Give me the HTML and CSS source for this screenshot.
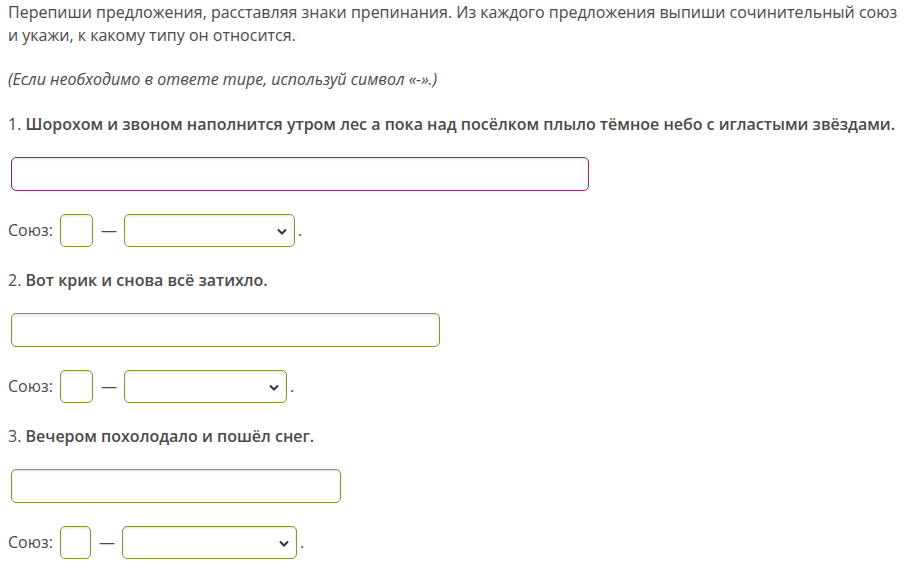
FILE: index.html
```html
<!DOCTYPE html>
<html lang="ru">
<head>
  <meta charset="UTF-8">
  <title>Задание</title>
  <link rel="stylesheet" href="styles.css">
</head>
<body>
  <p class="intro">Перепиши предложения, расставляя знаки препинания. Из каждого предложения выпиши сочинительный союз и укажи, к какому типу он относится.</p>
  <p class="note">(Если необходимо в ответе тире, используй символ «-».)</p>

  <div class="task">
    <p class="question">1. <b>Шорохом и звоном наполнится утром лес а пока над посёлком плыло тёмное небо с игластыми звёздами.</b></p>
    <input class="answer active" style="width:578px">
    <div class="union">
      <span>Союз:</span>
      <input class="small">
      <span class="dash">—</span>
      <span class="sel"><select style="width:171px"><option></option></select><svg viewBox="0 0 10 6"><path d="M1 1l4 4 4-4"/></svg></span>
      <span class="dot">.</span>
    </div>
  </div>

  <div class="task">
    <p class="question">2. <b>Вот крик и снова всё затихло.</b></p>
    <input class="answer" style="width:429px">
    <div class="union">
      <span>Союз:</span>
      <input class="small">
      <span class="dash">—</span>
      <span class="sel"><select style="width:163px"><option></option></select><svg viewBox="0 0 10 6"><path d="M1 1l4 4 4-4"/></svg></span>
      <span class="dot">.</span>
    </div>
  </div>

  <div class="task">
    <p class="question">3. <b>Вечером похолодало и пошёл снег.</b></p>
    <input class="answer" style="width:330px">
    <div class="union">
      <span>Союз:</span>
      <input class="small narrow">
      <span class="dash">—</span>
      <span class="sel"><select style="width:175px"><option></option></select><svg viewBox="0 0 10 6"><path d="M1 1l4 4 4-4"/></svg></span>
      <span class="dot">.</span>
    </div>
  </div>
</body>
</html>
```

FILE: styles.css
```css
body {
  font-family: "Open Sans", Arial, sans-serif;
  font-size: 16px;
  line-height: 23px;
  color: #4a4a4a;
  margin: 0;
  padding: 1px 18px 0 8px;
}

p {
  margin: 0;
}

.note {
  font-style: italic;
  margin-top: 21px;
}

.task {
  margin-top: 22px;
}

.question b {
  font-weight: 600;
}

input, select {
  font-family: inherit;
  font-size: 16px;
  box-sizing: border-box;
  border: 1px solid #7f9c32;
  border-radius: 5px;
  background: #fff;
  box-shadow: inset 0 1px 3px rgba(0, 0, 0, 0.12);
  outline: none;
  margin: 0;
}

.answer {
  display: block;
  height: 34px;
  margin: 21px 0 0 3px;
}

.answer.active {
  border-color: #8e2b70;
}

.union {
  display: flex;
  align-items: center;
  height: 33px;
  margin-top: 23px;
}

.small {
  width: 33px;
  height: 33px;
  margin-left: 7px;
}

.small.narrow {
  width: 31px;
}

.dash {
  margin: 0 7px 0 8px;
}

.sel {
  position: relative;
  display: block;
  height: 33px;
}

.sel select {
  appearance: none;
  display: block;
  height: 33px;
  padding: 0 24px 0 6px;
}

.sel svg {
  position: absolute;
  right: 8px;
  top: 14px;
  width: 10px;
  height: 7px;
  fill: none;
  stroke: #333;
  stroke-width: 2;
}

.dot {
  margin-left: 3px;
}
```
